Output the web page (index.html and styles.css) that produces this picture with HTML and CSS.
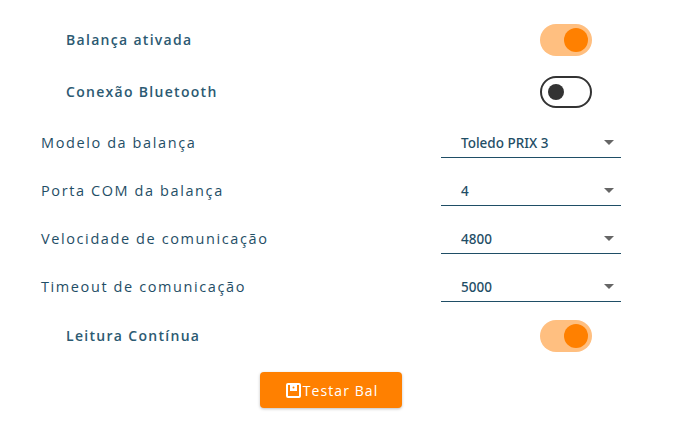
FILE: index.html
```html
<!DOCTYPE html>
<html lang="pt-BR">
<head>
    <meta charset="UTF-8">
    <title>Balança</title>
    <link rel="stylesheet" href="styles.css">
</head>
<body>
    <div class="form">
        <div class="switch-row first">
            <span class="switch-label">Balança ativada</span>
            <span class="toggle on"><span class="thumb"></span></span>
        </div>
        <div class="switch-row second">
            <span class="switch-label">Conexão Bluetooth</span>
            <span class="toggle off"><span class="thumb"></span></span>
        </div>

        <div class="select-row">
            <span class="select-label">Modelo da balança</span>
            <div class="select"><span>Toledo PRIX 3</span><span class="arrow"></span></div>
        </div>
        <div class="select-row">
            <span class="select-label">Porta COM da balança</span>
            <div class="select"><span>4</span><span class="arrow"></span></div>
        </div>
        <div class="select-row">
            <span class="select-label">Velocidade de comunicação</span>
            <div class="select"><span>4800</span><span class="arrow"></span></div>
        </div>
        <div class="select-row">
            <span class="select-label">Timeout de comunicação</span>
            <div class="select"><span>5000</span><span class="arrow"></span></div>
        </div>

        <div class="switch-row third">
            <span class="switch-label">Leitura Contínua</span>
            <span class="toggle on"><span class="thumb"></span></span>
        </div>

        <div class="actions">
            <button class="test-button">
                <svg class="save-icon" width="15" height="15" viewBox="0 0 15 15">
                    <path d="M2 1h11a1 1 0 0 1 1 1v11a1 1 0 0 1-1 1H2a1 1 0 0 1-1-1V2a1 1 0 0 1 1-1z" fill="none" stroke="#fff" stroke-width="2"/>
                    <path d="M4 2h7v6H4z" fill="#fff"/>
                    <circle cx="7.5" cy="4.5" r="1" fill="#ff8000"/>
                </svg>Testar Bal
            </button>
        </div>
    </div>
</body>
</html>
```

FILE: styles.css
```css
body {
    margin: 0;
    background: #fff;
    font-family: "Open Sans", sans-serif;
    color: #1f4e66;
}
.form {
    width: 676px;
    height: 443px;
    padding: 24px 55px 0 41px;
    box-sizing: border-box;
}
.switch-row {
    display: flex;
    justify-content: space-between;
    align-items: center;
    height: 32px;
    padding: 0 29px 0 25px;
}
.second {
    margin-top: 20px;
}
.third {
    margin-top: 2px;
}
.switch-label {
    font-size: 14px;
    font-weight: 600;
    letter-spacing: 1.3px;
    margin-top: -2px;
    color: #2c5a72;
}
.toggle {
    display: flex;
    align-items: center;
    width: 52px;
    height: 32px;
    box-sizing: border-box;
    border-radius: 16px;
}
.toggle.on {
    background: #ffbf80;
    justify-content: flex-end;
    padding-right: 4px;
}
.toggle.on .thumb {
    width: 24px;
    height: 24px;
    border-radius: 50%;
    background: #ff8000;
}
.toggle.off {
    border: 2px solid #333;
    padding-left: 6px;
}
.toggle.off .thumb {
    width: 16px;
    height: 16px;
    border-radius: 50%;
    background: #333;
}
.select-row {
    display: flex;
    justify-content: space-between;
    height: 48px;
    align-items: flex-start;
}
.second + .select-row {
    margin-top: 18px;
}
.select-label {
    font-size: 14.5px;
    letter-spacing: 1.6px;
    line-height: 18px;
    margin-top: 8px;
}
.select {
    display: flex;
    justify-content: space-between;
    align-items: center;
    width: 180px;
    height: 32px;
    box-sizing: border-box;
    padding: 2px 7px 0 20px;
    border-bottom: 1px solid #1f4e66;
    font-family: "Noto Sans", sans-serif;
    font-size: 13.5px;
    font-weight: 500;
}
.arrow {
    width: 0;
    height: 0;
    border-left: 5px solid transparent;
    border-right: 5px solid transparent;
    border-top: 5px solid #666;
}
.actions {
    display: flex;
    justify-content: center;
    margin-top: 20px;
}
.test-button {
    display: flex;
    align-items: center;
    justify-content: center;
    width: 142px;
    height: 36px;
    padding: 0 0 0 2px;
    border: none;
    border-radius: 4px;
    background: #ff8000;
    color: #fff;
    font-family: "Open Sans", sans-serif;
    font-size: 14px;
    letter-spacing: 1.1px;
    box-shadow: 0 1px 3px rgba(0, 0, 0, 0.25);
}
.save-icon {
    margin-right: 2px;
}
```
